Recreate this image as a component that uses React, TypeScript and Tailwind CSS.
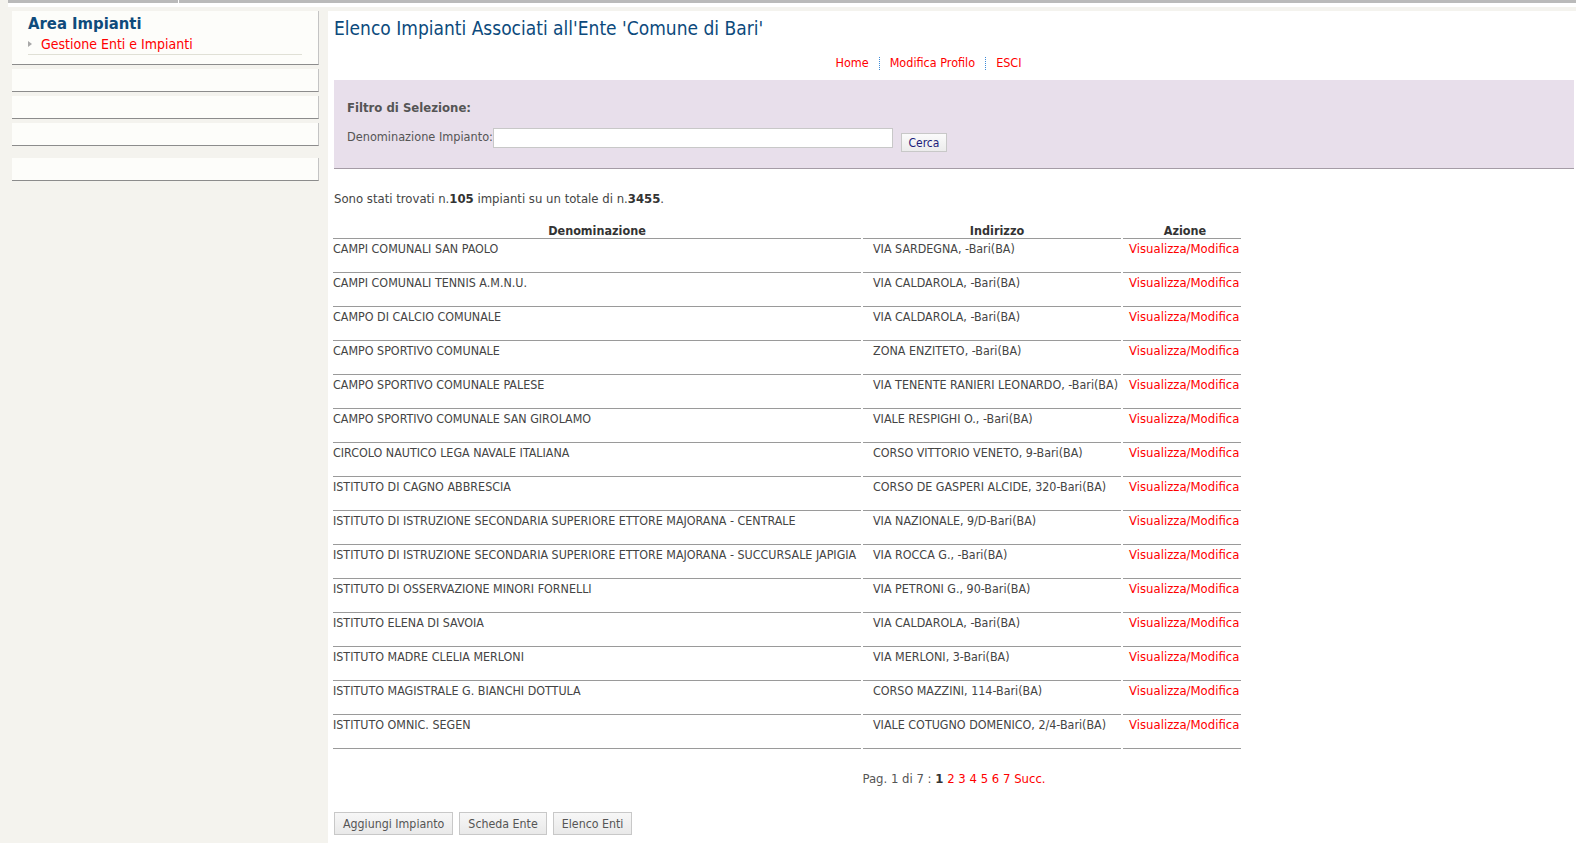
import React from "react";

const rows: [string, string][] = [
  ["CAMPI COMUNALI SAN PAOLO", "VIA SARDEGNA, -Bari(BA)"],
  ["CAMPI COMUNALI TENNIS A.M.N.U.", "VIA CALDAROLA, -Bari(BA)"],
  ["CAMPO DI CALCIO COMUNALE", "VIA CALDAROLA, -Bari(BA)"],
  ["CAMPO SPORTIVO COMUNALE", "ZONA ENZITETO, -Bari(BA)"],
  ["CAMPO SPORTIVO COMUNALE PALESE", "VIA TENENTE RANIERI LEONARDO, -Bari(BA)"],
  ["CAMPO SPORTIVO COMUNALE SAN GIROLAMO", "VIALE RESPIGHI O., -Bari(BA)"],
  ["CIRCOLO NAUTICO LEGA NAVALE ITALIANA", "CORSO VITTORIO VENETO, 9-Bari(BA)"],
  ["ISTITUTO DI CAGNO ABBRESCIA", "CORSO DE GASPERI ALCIDE, 320-Bari(BA)"],
  ["ISTITUTO DI ISTRUZIONE SECONDARIA SUPERIORE ETTORE MAJORANA - CENTRALE", "VIA NAZIONALE, 9/D-Bari(BA)"],
  ["ISTITUTO DI ISTRUZIONE SECONDARIA SUPERIORE ETTORE MAJORANA - SUCCURSALE JAPIGIA", "VIA ROCCA G., -Bari(BA)"],
  ["ISTITUTO DI OSSERVAZIONE MINORI FORNELLI", "VIA PETRONI G., 90-Bari(BA)"],
  ["ISTITUTO ELENA DI SAVOIA", "VIA CALDAROLA, -Bari(BA)"],
  ["ISTITUTO MADRE CLELIA MERLONI", "VIA MERLONI, 3-Bari(BA)"],
  ["ISTITUTO MAGISTRALE G. BIANCHI DOTTULA", "CORSO MAZZINI, 114-Bari(BA)"],
  ["ISTITUTO OMNIC. SEGEN", "VIALE COTUGNO DOMENICO, 2/4-Bari(BA)"],
];

function SidePanel({ className = "" }: { className?: string }) {
  return <div className={`h-[23px] bg-[#fdfdfa] border-r border-r-[#c4c4c4] border-b border-b-[#8c8c8c] ${className}`} />;
}

function Sidebar() {
  return (
    <aside className="w-[328px] shrink-0 bg-[#f4f3ee] pl-[12px] pr-[9px] pb-10">
      <div className="h-[54px] bg-[#fdfdfa] border-r border-r-[#c4c4c4] border-b border-b-[#8c8c8c] pl-[16px] pr-[16px] pt-[3px]">
        <div className="text-[16.5px] leading-[20px] font-bold text-[#0f4b7c]">Area Impianti</div>
        <div className="flex items-center h-[16px] mt-[2px] pb-0">
          <span className="w-0 h-0 border-y-[3px] border-y-transparent border-l-[4px] border-l-[#a8a8a8] mr-[9px]" />
          <a className="text-[14px] leading-[16px] text-[#ff0000]">Gestione Enti e Impianti</a>
        </div>
        <div className="mt-[2px] border-b border-[#e0e0d6]" />
      </div>
      <SidePanel className="mt-[4px]" />
      <SidePanel className="mt-[4px]" />
      <SidePanel className="mt-[4px]" />
      <SidePanel className="mt-[12px]" />
    </aside>
  );
}

export default function App() {
  return (
    <div className="min-h-screen bg-white font-['DejaVu_Sans_Condensed','DejaVu_Sans',sans-serif] font-stretch-condensed text-[13px] text-[#444]">
      {/* top strip */}
      <div className="flex bg-[#f4f3ee]">
        <div className="w-[8px]" />
        <div className="flex-1">
          <div className="flex h-[3px]">
            <div className="w-[170px] bg-[#bababa]" />
            <div className="w-[1px] bg-white" />
            <div className="flex-1 bg-[#bababa]" />
          </div>
          <div className="h-[4px] bg-white" />
        </div>
      </div>
      <div className="h-[4px] bg-[#f4f3ee]" />

      <div className="flex">
        <Sidebar />
        <main className="flex-1 pl-[6px] pr-[2px] pb-[8px]">
          <h1 className="mt-[5px] text-[19px] leading-[24px] text-[#0c4a7c]">
            Elenco Impianti Associati all'Ente 'Comune di Bari'
          </h1>

          <nav className="mt-[15px] h-[16px] flex justify-center items-center pr-[51px] text-[12.5px] leading-[16px] text-[#ff0000]">
            <a>Home</a>
            <span className="mx-[10px] h-[13px] border-l border-dotted border-[#3d8bd8]" />
            <a>Modifica Profilo</a>
            <span className="mx-[10px] h-[13px] border-l border-dotted border-[#3d8bd8]" />
            <a>ESCI</a>
          </nav>

          <section className="mt-[9px] h-[89px] bg-[#e8dfeb] border-b border-[#a59ca6] pl-[13px] pt-[20px] text-[#555]">
            <div className="text-[13px] leading-[16px] font-bold text-[#555]">Filtro di Selezione:</div>
            <div className="mt-[12px] flex items-start">
              <label className="mt-[1px] text-[12.6px] leading-[16px]">Denominazione Impianto:</label>
              <input type="text" className="w-[400px] h-[20px] bg-white border border-[#c8c8c8] outline-none" />
              <button className="ml-[8px] mt-[5px] w-[46px] h-[19px] border border-[#c8c8c8] bg-gradient-to-b from-[#fbfbfb] to-[#ececec] text-[12px] leading-[16px] text-[#1d1d7a]">
                Cerca
              </button>
            </div>
          </section>

          <p className="mt-[22px] leading-[16px]">
            Sono stati trovati n.<b className="text-[#333]">105</b> impianti su un totale di n.<b className="text-[#333]">3455</b>.
          </p>

          <div className="mt-[15px] w-[908px] -ml-[1px]">
            <div className="flex gap-[2px] h-[17px] font-bold text-[12.5px] leading-[16px] text-[#333]">
              <div className="w-[528px] pt-[1px] text-center border-b border-[#9a9a9a]">Denominazione</div>
              <div className="w-[258px] pt-[1px] pl-[10px] text-center border-b border-[#9a9a9a]">Indirizzo</div>
              <div className="w-[118px] pt-[1px] pl-[6px] text-center border-b border-[#9a9a9a]">Azione</div>
            </div>
            {rows.map(([nome, indirizzo], i) => (
              <div key={i} className="flex gap-[2px] h-[34px] leading-[16px]">
                <div className="w-[528px] pt-[2px] border-b border-[#9a9a9a] whitespace-nowrap overflow-hidden text-[12.4px]">{nome}</div>
                <div className="w-[258px] pl-[10px] pt-[2px] border-b border-[#9a9a9a] whitespace-nowrap text-[12.4px]">{indirizzo}</div>
                <div className="w-[118px] pl-[6px] pt-[2px] border-b border-[#9a9a9a] whitespace-nowrap text-[#ff0000]">
                  <a>Visualizza/Modifica</a>
                </div>
              </div>
            ))}
          </div>

          <div className="mt-[22px] text-center leading-[16px] text-[#555]">
            Pag. 1 di 7 : <b className="text-[#333]">1</b>{" "}
            {["2", "3", "4", "5", "6", "7"].map((n) => (
              <a key={n} className="text-[#ff0000]">{n} </a>
            ))}
            <a className="text-[#ff0000]">Succ.</a>
          </div>

          <div className="mt-[25px] flex gap-[6px]">
            {["Aggiungi Impianto", "Scheda Ente", "Elenco Enti"].map((b) => (
              <button key={b} className="h-[23px] px-[8px] border border-[#c8c8c8] bg-gradient-to-b from-[#f7f7f7] to-[#e9e9e9] text-[12.3px] leading-[16px] text-[#555]">
                {b}
              </button>
            ))}
          </div>
        </main>
      </div>
    </div>
  );
}
